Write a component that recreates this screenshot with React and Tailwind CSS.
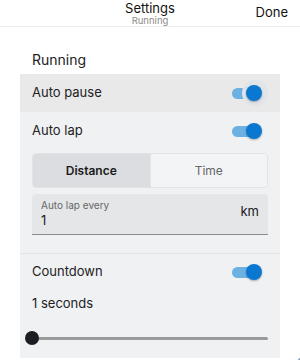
import { useState } from "react";

function Toggle({ on, halo }) {
  return (
    <div className="relative w-[30px] h-[16px] flex items-center">
      <div className={`absolute left-0 right-[2px] h-[11px] rounded-full ${on ? "bg-[#6db1e3]" : "bg-[#bdbdbd]"}`} />
      {halo && <div className="absolute right-[-6px] top-[-5px] w-[26px] h-[26px] rounded-full bg-[#e1e5e9]" />}
      <div className={`absolute top-0 w-[16px] h-[16px] rounded-full shadow-[0_1px_2px_rgba(0,0,0,0.3)] ${on ? "right-0 bg-[#0a78d0]" : "left-0 bg-white"}`} />
    </div>
  );
}

export default function App() {
  const [mode, setMode] = useState("distance");

  return (
    <div className="relative w-[300px] h-[360px] overflow-hidden bg-white text-[#222] font-['Inter',sans-serif]">
      {/* Header */}
      <div className="relative h-[27px] border-b border-[#ececec] flex flex-col items-center font-['Roboto','Liberation Sans',sans-serif]">
        <div className="text-[13px] leading-[14px] pt-[1px] text-[#111]">Settings</div>
        <div className="text-[9.5px] leading-[10px] mt-[1px] text-[#8a8a8a]">Running</div>
        <div className="absolute right-[12px] top-[5px] text-[13px] leading-[14px] text-[#111]">Done</div>
      </div>

      {/* Section title */}
      <div className="px-[32px] pt-[23px] h-[47px] text-[14px] leading-[20px] text-[#222]">Running</div>

      {/* Card */}
      <div className="mx-[20px] bg-[#f0f1f3]">
        <div className="h-[38px] bg-[#e9e9ea] flex items-center justify-between pl-[12px] pr-[18px]">
          <span className="text-[13px]">Auto pause</span>
          <Toggle on halo />
        </div>

        <div className="h-[38px] flex items-center justify-between pl-[12px] pr-[18px]">
          <span className="text-[13px]">Auto lap</span>
          <Toggle on />
        </div>

        <div className="px-[12px] pt-[3px] pb-[18px] border-b border-[#e3e4e6]">
          <div className="flex h-[35px] rounded-[4px] border border-[#e2e3e5] overflow-hidden text-[12px]">
            <button
              onClick={() => setMode("distance")}
              className={`flex-1 font-semibold ${mode === "distance" ? "bg-[#dcdde0] text-[#1a1a1a]" : "bg-[#f3f4f6] text-[#666]"}`}
            >
              Distance
            </button>
            <button
              onClick={() => setMode("time")}
              className={`flex-1 border-l border-[#e2e3e5] ${mode === "time" ? "bg-[#dcdde0] text-[#1a1a1a] font-semibold" : "bg-[#f3f4f6] text-[#666]"}`}
            >
              Time
            </button>
          </div>

          <div className="mt-[6px] h-[41px] bg-[#e5e6e8] rounded-t-[4px] border-b border-[#8c8c8c] flex items-center justify-between pl-[9px] pr-[9px]">
            <div className="flex flex-col">
              <span className="text-[10px] leading-[12px] text-[#666]">Auto lap every</span>
              <span className="text-[13px] leading-[18px] text-[#1a1a1a]">1</span>
            </div>
            <span className="text-[13px] text-[#1a1a1a] mt-[-4px]">km</span>
          </div>
        </div>

        <div className="h-[36px] flex items-center justify-between pl-[12px] pr-[18px]">
          <span className="text-[13px]">Countdown</span>
          <Toggle on />
        </div>

        <div className="h-[28px] flex items-center pl-[12px] text-[13px]">1 seconds</div>

        <div className="relative h-[40px] mx-[12px] flex items-center">
          <div className="w-full h-[3px] rounded-full bg-[#9a9a9a]" />
          <div className="absolute left-[-7px] w-[14px] h-[14px] rounded-full bg-[#1b1d20]" />
        </div>
      </div>

      {/* Floating button peeking in */}
      <div className="absolute left-[293px] top-[353px] w-[40px] h-[40px] rounded-full bg-[#7f9dba]" />
    </div>
  );
}
